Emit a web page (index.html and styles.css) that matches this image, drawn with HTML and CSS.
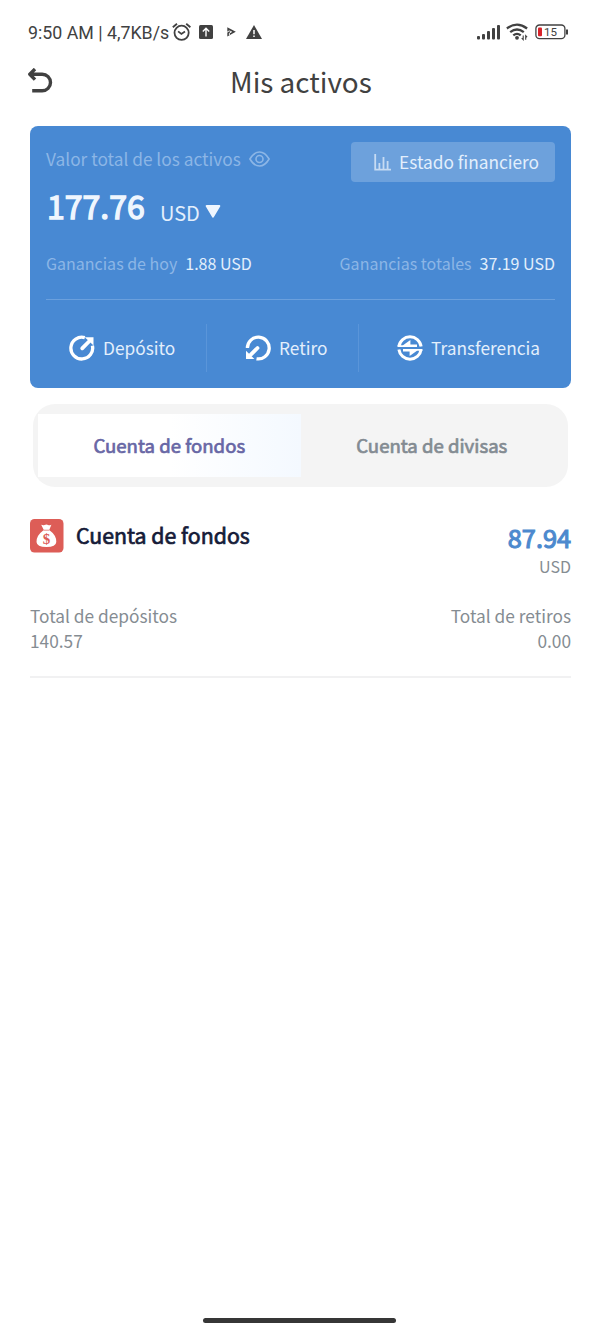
FILE: index.html
```html
<!DOCTYPE html>
<html lang="es">
<head>
<meta charset="utf-8">
<title>Mis activos</title>
<link rel="stylesheet" href="styles.css">
</head>
<body>
<div class="statusbar">
  <span class="clock">9:50 AM | 4,7KB/s</span>
  <svg class="alarm" width="20" height="20" viewBox="0 0 20 20" fill="none" stroke="#414141" stroke-width="1.8"><circle cx="9.6" cy="10.8" r="7.1"/><path d="M.8 5.3 5 1.8M18.4 5.3 14.2 1.8M6.1 9.4l3.3 2.6 3.6-2.4"/></svg>
  <svg class="upload" width="14" height="14" viewBox="0 0 14 14"><rect width="14" height="14" rx="1.5" fill="#414141"/><path d="M7 11.5V4M3.8 6.5 7 3.3l3.2 3.2" fill="none" stroke="#fff" stroke-width="1.4"/></svg>
  <svg class="play" width="9" height="10" viewBox="0 0 9 10"><path d="M.3.3 8.8 4.7.3 9.5z" fill="#414141"/><path d="M0 5.2 2.2 3.9 4.6 4.8 2.4 6.2V8" fill="none" stroke="#fff" stroke-width=".9"/></svg>
  <svg class="warn" width="16" height="14" viewBox="0 0 16 14"><path d="M8 0 16 14H0z" fill="#414141"/><path d="M8 5v4.2M8 10.4v1.7" stroke="#fff" stroke-width="1.5"/></svg>
  <svg class="signal" width="24" height="16" viewBox="0 0 24 16" fill="#414141"><rect x="0" y="12" width="3" height="3.5" rx="1"/><rect x="5" y="10" width="3" height="5.5" rx="1"/><rect x="10" y="7" width="3" height="8.5" rx="1"/><rect x="15" y="4" width="3" height="11.5" rx="1"/><rect x="20" y="1" width="3" height="14.5" rx="1"/></svg>
  <svg class="wifi" width="23" height="18" viewBox="0 0 23 18" fill="none" stroke="#414141" stroke-width="2.3"><path d="M.9 5.5Q11 -2.2 21.1 5.5M4.2 9.2Q11 3.8 17.8 9.2M7.3 12.4Q11 9.4 14.7 12.4"/><circle cx="11" cy="14.8" r="1.9" fill="#414141" stroke="none"/><path d="M17.2 12.4v4.2l-1.5-1.5M19.7 16.8v-4.2l1.4 1.5" stroke-width="1.1"/></svg>
  <svg class="battery" width="34" height="16" viewBox="0 0 34 16"><rect x=".9" y="1" width="29" height="13.6" rx="3.6" fill="none" stroke="#414141" stroke-width="1.3"/><rect x="3" y="3.5" width="4" height="8.8" rx="1" fill="#d8232a"/><path d="M32 5.5v5" stroke="#414141" stroke-width="2"/><text x="9.1" y="11.7" class="charge">15</text></svg>
</div>
<header class="header">
  <svg class="back" width="26" height="26" viewBox="0 0 26 26" fill="none" stroke="#414141" stroke-width="3.4" stroke-linejoin="round"><path d="M8 1 2.8 6.2l5.2 5.4M3 6.2H15.2a8.3 8.3 0 0 1 0 16.6H5.2"/></svg>
  <h1 class="title">Mis activos</h1>
</header>
<section class="card">
  <div class="summary">
    <div class="total-label"><span>Valor total de los activos</span>
      <svg width="21" height="16" viewBox="0 0 21 16" fill="none" stroke="#8cb6e6" stroke-width="1.6"><path d="M.9 8Q5 1 10.5 1T20.1 8Q16 15 10.5 15T.9 8Z"/><circle cx="10.5" cy="8" r="3.5"/></svg>
    </div>
    <div class="statement">
      <svg width="17" height="17" viewBox="0 0 17 17" fill="none" stroke="#c6dbf3" stroke-width="1.8"><path d="M1.2 0v15.6H17M5.4 9v6M9.5 3v12M13.6 7v8"/></svg>
      <span>Estado financiero</span>
    </div>
  </div>
  <div class="amount"><strong>177.76</strong><span>USD</span>
    <svg width="16" height="13" viewBox="0 0 16 13"><path d="M1.6 1h12.8L8 11.8z" fill="#eff6fe" stroke="#eff6fe" stroke-width="1.8" stroke-linejoin="round"/></svg>
  </div>
  <div class="gains">
    <div><span class="dim">Ganancias de hoy</span><span>1.88 USD</span></div>
    <div><span class="dim">Ganancias totales</span><span>37.19 USD</span></div>
  </div>
  <div class="actions">
    <div class="action deposit">
      <svg width="26" height="26" viewBox="0 0 26 26"><path d="M15.8 2.6A10.9 10.9 0 1 0 23.4 10.6" fill="none" stroke="#fff" stroke-width="3.3"/><path d="M13.2 13.3 20 6.5" stroke="#fff" stroke-width="3.8" stroke-linecap="round"/><path d="M15.8 2.2h8.7v8.3z" fill="#fff"/></svg>
      <span>Depósito</span>
    </div>
    <div class="action withdraw">
      <svg width="26" height="26" viewBox="0 0 26 26"><path d="M2.4 13A10.9 10.9 0 1 1 11.5 23.8" fill="none" stroke="#fff" stroke-width="3.3"/><path d="M12.5 13 5.8 19.7" stroke="#fff" stroke-width="3.8" stroke-linecap="round"/><path d="M1 15.8 9.4 24H1z" fill="#fff"/></svg>
      <span>Retiro</span>
    </div>
    <div class="action transfer">
      <svg width="26" height="26" viewBox="0 0 26 26"><g fill="none" stroke="#fff" stroke-width="3"><path d="M1.9 11.5A11.2 11.2 0 0 1 24.1 11.5M1.9 14.5A11.2 11.2 0 0 0 24.1 14.5"/></g><path d="M6 10.2 13.4 5V9.4H20V12H.6V10.2zM20 15.8 12.6 21V16.6H6V14H25.4V15.8z" fill="#fff"/></svg>
      <span>Transferencia</span>
    </div>
  </div>
</section>
<nav class="tabs">
  <div class="tab active"><span>Cuenta de fondos</span></div>
  <div class="tab"><span>Cuenta de divisas</span></div>
</nav>
<section class="account">
  <div class="account-head">
    <svg width="34" height="34" viewBox="0 0 34 34"><rect width="33.5" height="33.5" rx="4.5" fill="#dd5d57"/><path d="M11.2 5.8q1.8.8 3.3.3 2-1.2 3.6 0 1.5.5 3.3-.4l-2.2 5.2q7.5 5.4 7.1 12.2-.3 5-9.9 5t-9.9-5Q6.2 16.5 13.8 11z" fill="#fff"/><path d="M13.5 11.2h5.8" stroke="#dd5d57" stroke-width=".7"/><text x="16.6" y="24.8" class="coin">$</text></svg>
    <h2 class="account-name">Cuenta de fondos</h2>
    <div class="balance"><strong>87.94</strong><span>USD</span></div>
  </div>
  <div class="totals">
    <div><span>Total de depósitos</span><span>140.57</span></div>
    <div class="right"><span>Total de retiros</span><span>0.00</span></div>
  </div>
</section>
<div class="homebar"></div>
</body>
</html>
```
FILE: styles.css
```css
* { box-sizing: border-box; }
body {
  margin: 0;
  width: 600px;
  height: 1333px;
  display: flex;
  flex-direction: column;
  background: #fff;
  color: #414141;
  font-family: "Noto Sans CJK SC", "Noto Sans", sans-serif;
  white-space: nowrap;
  overflow: hidden;
}
svg { display: block; flex: none; }
.statusbar {
  height: 64px;
  padding: 0 31px 0 28px;
  display: flex;
  align-items: center;
}
.clock { font: 17.8px/24px Roboto, sans-serif; width: 144px; padding-top: 1px; }
.upload { margin-left: 7px; }
.play { margin-left: 14px; }
.warn { margin-left: 10px; }
.signal { margin-left: auto; }
.wifi { margin-left: 5px; }
.battery { margin-left: 6px; }
.charge { font: 11.5px Roboto, sans-serif; fill: #414141; }
.header { height: 62px; padding-left: 27px; display: flex; }
.back { margin-top: 4px; }
.title { margin: 0 0 0 177px; font-size: 27.9px; font-weight: 400; line-height: 34px; }
.card {
  height: 262px;
  margin: 0 29px 0 30px;
  padding: 16px;
  border-radius: 8px;
  background: #4889d3;
  color: #e3effc;
  display: flex;
  flex-direction: column;
}
.summary { display: flex; justify-content: space-between; height: 40px; }
.total-label { display: flex; align-items: center; gap: 8px; height: 33px; font-size: 17.3px; line-height: 33px; color: #8cb6e6; }
.statement {
  width: 204px; height: 40px; padding-left: 23px; border-radius: 4px;
  background: #6da1dc; display: flex; align-items: center; gap: 8px;
  font-size: 17.3px; line-height: 42px;
}
.amount { display: flex; height: 50px; font-size: 20px; line-height: 62px; }
.amount strong { width: 114px; padding-left: 1px; font-size: 32px; font-weight: 400; line-height: 47px; color: #eff6fe; -webkit-text-stroke: 1.4px #eff6fe; }
.amount svg { margin: 23px 0 0 5px; }
.gains { display: flex; justify-content: space-between; height: 68px; font-size: 16px; line-height: 62px; border-bottom: 1px solid #6ba0dd; }
.gains .dim { color: #8cb6e6; margin-right: 8px; }
.actions { display: flex; height: 72px; padding-top: 24px; font-size: 17.3px; line-height: 48px; }
.action { display: flex; align-items: center; gap: 8px; height: 48px; }
.deposit { width: 161px; padding-left: 23px; border-right: 1px solid #5a95d9; }
.withdraw { width: 152px; padding-left: 38px; border-right: 1px solid #5a95d9; }
.transfer { padding-left: 38px; }
.tabs {
  height: 83px; margin: 16px 32px 0 33px; padding: 10px 5px;
  border-radius: 22px; background: #f4f4f4; display: flex;
}
.tab { flex: 1; text-align: center; font-size: 18.6px; line-height: 62px; color: #838b92; -webkit-text-stroke: .7px #838b92; }
.tab.active { color: #6867a5; -webkit-text-stroke-color: #6867a5; background: linear-gradient(90deg, #fff 50%, #f4f9ff); }
.account { height: 191px; margin: 0 29px 0 30px; border-bottom: 2px solid #f1f1f2; }
.account-head { display: flex; padding-top: 32px; }
.account-name { margin: 0 0 0 12px; font-size: 21.3px; line-height: 32px; font-weight: 400; color: #151b38; -webkit-text-stroke: .7px #151b38; }
.balance { margin-left: auto; display: flex; flex-direction: column; text-align: right; font-size: 16px; line-height: 22px; color: #858c92; }
.balance strong { font-size: 25.3px; line-height: 36px; font-weight: 400; color: #4c89ce; -webkit-text-stroke: 1.1px #4c89ce; }
.totals { display: flex; justify-content: space-between; margin-top: 26px; font-size: 17.3px; line-height: 25px; color: #858c92; }
.totals div { display: flex; flex-direction: column; }
.totals .right { text-align: right; }
.coin { font: bold 15px "Liberation Serif", serif; fill: #dd5d57; text-anchor: middle; }
.homebar { width: 193px; height: 5px; margin: auto auto 10px 203px; border-radius: 3px; background: #363636; }
```
